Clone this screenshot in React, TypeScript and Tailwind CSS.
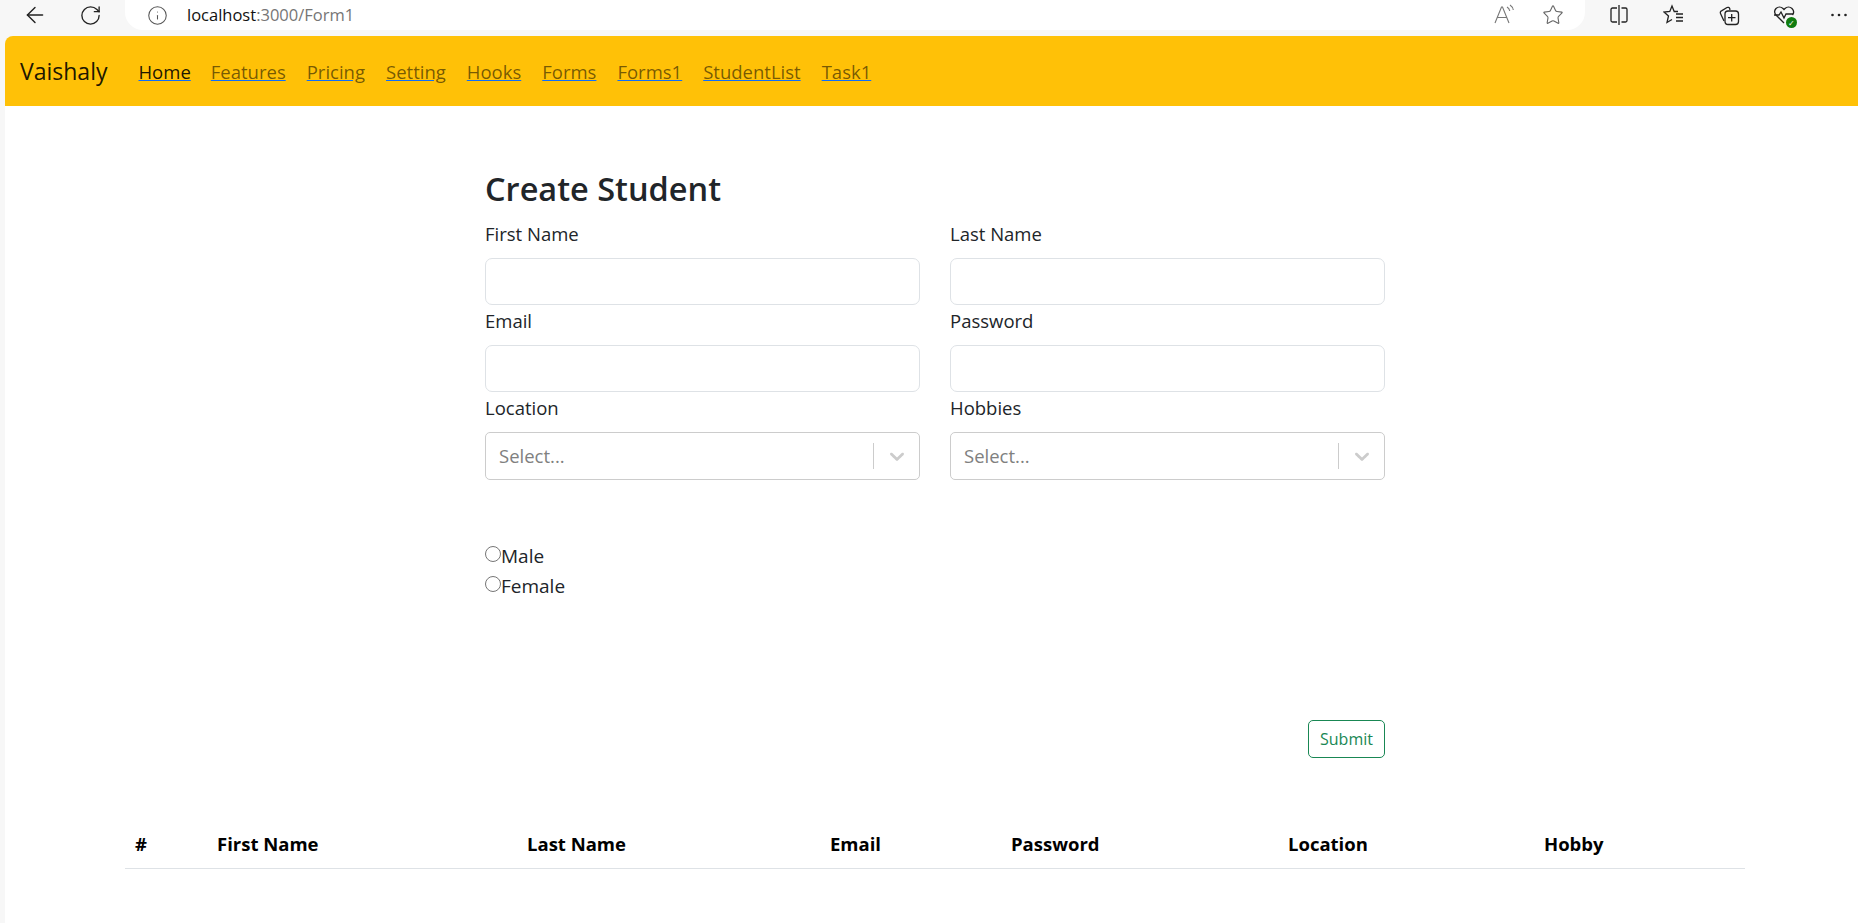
import { ArrowLeft, Info, RotateCw, Star } from "lucide-react"

const links = ["Features", "Pricing", "Setting", "Hooks", "Forms", "Forms1", "StudentList", "Task1"]

const headers = [
  { label: "#", width: "w-[82px]" },
  { label: "First Name", width: "w-[310px]" },
  { label: "Last Name", width: "w-[303px]" },
  { label: "Email", width: "w-[181px]" },
  { label: "Password", width: "w-[277px]" },
  { label: "Location", width: "w-[256px]" },
  { label: "Hobby", width: "w-[211px]" },
]

function BrowserBar() {
  return (
    <div className="h-9 bg-[#f7f7f7] flex items-start">
      <div className="w-[125px] h-[30px] flex items-center text-[#222]">
        <ArrowLeft size={26} strokeWidth={1.3} className="ml-[22px]" />
        <RotateCw size={23} strokeWidth={1.4} className="ml-[31px]" />
      </div>
      <div className="w-[1460px] h-[30px] bg-white rounded-br-[18px] rounded-bl-[18px] flex items-center">
        <Info size={21} strokeWidth={1.2} className="ml-[22px] text-[#555]" />
        <span className="ml-[19px] text-[16.5px] text-[#111]">
          localhost<span className="text-[#767676]">:3000/Form1</span>
        </span>
        <svg width="22" height="22" viewBox="0 0 22 22" fill="none" stroke="#777" strokeWidth="1.1" className="ml-auto">
          <path d="M2 19 8.500 3h1L16 19M4.500 13.500h9" />
          <path d="M14 3c1.600 1 2.400 2.200 2.800 4M17 1c2 1.300 3 3 3.300 5" />
        </svg>
        <Star size={22} strokeWidth={1.2} className="ml-[27px] mr-[21px] text-[#666]" />
      </div>
      <div className="flex-1 h-[30px] flex items-center text-[#222]">
        <svg width="22" height="22" viewBox="0 0 22 22" fill="none" stroke="currentColor" strokeWidth="1.3" className="ml-[23px]">
          <path d="M9 4H4.500A1.500 1.500 0 0 0 3 5.500v11A1.500 1.500 0 0 0 4.500 18H9M13.500 4h4A1.500 1.500 0 0 1 19 5.500v11a1.500 1.500 0 0 1-1.500 1.500h-4M11 1v20" />
        </svg>
        <svg width="22" height="22" viewBox="0 0 22 22" fill="none" stroke="currentColor" strokeWidth="1.3" className="ml-[33px]">
          <path d="M15 7.500h-3.800L9 2 6.800 7.500 1 8l4.500 4L4 18.500l5-3" />
          <path d="M13 10h7M13 13.500h7M13 17h7" />
        </svg>
        <svg width="22" height="22" viewBox="0 0 22 22" fill="none" stroke="currentColor" strokeWidth="1.3" className="ml-[33px]">
          <path d="M6 17 2.500 9.500a2 2 0 0 1 1-2.700L9 3.500a2 2 0 0 1 2.700 1L12 6" />
          <rect x="7" y="7" width="13.500" height="13.500" rx="3" />
          <path d="M13.700 10v7.500M10 13.700h7.500" />
        </svg>
        <div className="relative ml-[33px] w-[22px] h-[22px]">
          <svg width="22" height="22" viewBox="0 0 22 22" fill="none" stroke="currentColor" strokeWidth="1.3">
            <path d="M11 19 3 11a5 5 0 0 1 0-6.500 5 5 0 0 1 7 0l1 1 1-1a5 5 0 0 1 7 0 5 5 0 0 1 .5 6.500" />
            <path d="M1 11h5l2-3 3 6 2-4h7" />
          </svg>
          <span className="absolute right-[-2px] bottom-[-2px] w-[11px] h-[11px] rounded-full bg-[#107c10] flex items-center justify-center text-white text-[8px] leading-none">✓</span>
        </div>
        <svg width="18" height="6" viewBox="0 0 18 6" fill="#222" className="ml-[35px]">
          <circle cx="2.500" cy="3" r="1.300" />
          <circle cx="9" cy="3" r="1.300" />
          <circle cx="15.500" cy="3" r="1.300" />
        </svg>
      </div>
    </div>
  )
}

function Navbar() {
  return (
    <nav className="h-[70px] bg-[#ffc107] rounded-tl-[8px] flex items-center pl-[15px]">
      <span className="text-[23px] text-black/90 mr-[31px]">Vaishaly</span>
      <a href="#" className="pt-[2px] text-[18.5px] text-black/90 underline decoration-[#0d6efd] mr-5">Home</a>
      <div className="flex gap-[21px] pt-[2px]">
        {links.map((link) => (
          <a key={link} href="#" className="text-[18.5px] text-black/55 underline decoration-[#0d6efd]">{link}</a>
        ))}
      </div>
    </nav>
  )
}

function Field({ label }: { label: string }) {
  return (
    <div>
      <label className="block h-[40px] pt-[2px] text-[18.5px] leading-[28px] text-[#212529]">{label}</label>
      <input className="block w-full h-[47px] border border-[#dee2e6] rounded-[7px] bg-white" />
    </div>
  )
}

function SelectField({ label }: { label: string }) {
  return (
    <div>
      <label className="block h-[40px] pt-[2px] text-[18.5px] leading-[28px] text-[#212529]">{label}</label>
      <div className="h-[48px] border border-[#ccc] rounded-[5px] bg-white flex items-center">
        <span className="flex-1 pl-[13px] text-[18.5px] text-[#808080]">Select...</span>
        <span className="w-px h-[26px] bg-[#ccc]" />
        <svg width="24" height="24" viewBox="0 0 20 20" fill="#ccc" className="ml-[11px] mr-[10px]">
          <path d="M4.516 7.548c.436-.446 1.043-.481 1.576 0L10 11.295l3.908-3.747c.533-.481 1.141-.446 1.574 0 .436.445.408 1.197 0 1.615-.406.418-4.695 4.502-4.695 4.502a1.095 1.095 0 0 1-1.576 0S4.924 9.581 4.516 9.163c-.409-.418-.436-1.170 0-1.615z" />
        </svg>
      </div>
    </div>
  )
}

function Radio({ label }: { label: string }) {
  return (
    <label className="flex items-start h-[30px] text-[19px] leading-[32px] text-[#212529]">
      <input type="radio" name="gender" className="w-4 h-4 mt-[6px] appearance-none rounded-full border border-[#767676] bg-white" />
      {label}
    </label>
  )
}

export default function App() {
  return (
    <div className="h-[923px] overflow-hidden bg-[#f7f7f7] font-['Open_Sans',sans-serif]">
      <BrowserBar />
      <div className="pl-[5px]">
        <Navbar />
        <main className="bg-white h-[817px]">
          <div className="w-[900px] ml-[480px] pt-[63px]">
            <h1 className="text-[32.5px] leading-[40px] font-semibold text-[#212529] mb-[9px]">Create Student</h1>
            <div className="grid grid-cols-2 gap-x-[30px]">
              <Field label="First Name" />
              <Field label="Last Name" />
              <Field label="Email" />
              <Field label="Password" />
              <SelectField label="Location" />
              <SelectField label="Hobbies" />
            </div>
            <div className="mt-[60px]">
              <Radio label="Male" />
              <Radio label="Female" />
            </div>
            <div className="flex justify-end mt-[120px]">
              <button className="h-[38px] w-[77px] border border-[#198754] rounded-[5px] text-[16px] text-[#198754]">Submit</button>
            </div>
          </div>
          <table className="ml-[120px] mt-[60px] w-[1620px] table-fixed border-b border-[#dee2e6]">
            <thead>
              <tr>
                {headers.map((h) => (
                  <th key={h.label} className={`${h.width} h-[50px] px-[10px] pt-[2px] text-left text-[18.5px] font-bold text-black`}>{h.label}</th>
                ))}
              </tr>
            </thead>
          </table>
        </main>
      </div>
    </div>
  )
}
